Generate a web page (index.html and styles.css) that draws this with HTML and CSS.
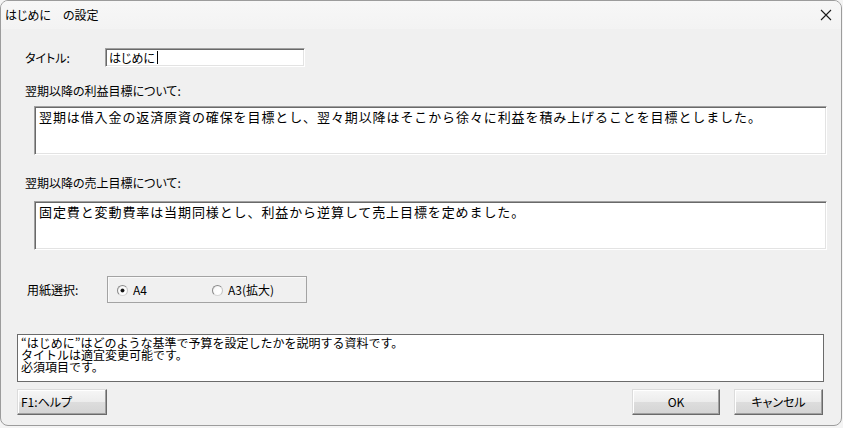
FILE: index.html
```html
<!DOCTYPE html>
<html lang="ja">
<head>
<meta charset="utf-8">
<title>はじめに　の設定</title>
<link rel="stylesheet" href="styles.css">
</head>
<body>
<div class="window">
  <div class="titlebar">
    <span class="title">はじめに　の設定</span>
    <svg class="close" width="12" height="12" viewBox="0 0 12 12"><path d="M1 1 L11 11 M11 1 L1 11" stroke="#1a1a1a" stroke-width="1.1" fill="none"/></svg>
  </div>
  <div class="content">
    <div class="title-row">
      <span class="label title-label">タイトル:</span>
      <div class="edit title-input">はじめに<span class="caret"></span></div>
    </div>
    <div class="label section-label first">翌期以降の利益目標について:</div>
    <div class="edit memo">翌期は借入金の返済原資の確保を目標とし、翌々期以降はそこから徐々に利益を積み上げることを目標としました。</div>
    <div class="label section-label second">翌期以降の売上目標について:</div>
    <div class="edit memo">固定費と変動費率は当期同様とし、利益から逆算して売上目標を定めました。</div>
    <div class="paper-row">
      <span class="label paper-label">用紙選択:</span>
      <div class="group">
        <span class="radio-item a4"><span class="radio checked"></span><span class="radio-text">A4</span></span>
        <span class="radio-item a3"><span class="radio"></span><span class="radio-text">A3(拡大)</span></span>
      </div>
    </div>
    <div class="info">
      <div class="info-line">“はじめに”はどのような基準で予算を設定したかを説明する資料です。</div>
      <div class="info-line">タイトルは適宜変更可能です。</div>
      <div class="info-line">必須項目です。</div>
    </div>
    <div class="buttons">
      <button class="btn help">F1:ヘルプ</button>
      <div class="right-buttons">
        <button class="btn ok">OK</button>
        <button class="btn cancel">キャンセル</button>
      </div>
    </div>
  </div>
</div>
</body>
</html>
```
FILE: styles.css
```css
* { box-sizing: border-box; }
html, body { margin: 0; padding: 0; }
body {
  background: #f4f4f4;
  width: 843px;
  height: 428px;
  overflow: hidden;
  font-family: "Noto Sans CJK JP", "Noto Sans", sans-serif;
  color: #000;
}
.window {
  width: 842px;
  height: 426px;
  background: #f0f0f0;
  border: 1px solid #9c9c9c;
  border-radius: 8px;
  overflow: hidden;
}
.titlebar {
  height: 28px;
  display: flex;
  align-items: center;
  justify-content: space-between;
  padding: 0 9px 0 4px;
  background: linear-gradient(#f7f7f7, #f3f3f3);
}
.title {
  font-size: 12px;
  font-feature-settings: "palt";
  line-height: 14px;
  margin-top: -1px;
}
.close { display: block; margin-top: -1px; }
.content { padding: 0; }
.label {
  font-size: 12px;
  line-height: 14px;
  font-feature-settings: "palt";
  white-space: nowrap;
}
.title-row {
  display: flex;
  align-items: center;
  margin-top: 19px;
  padding-left: 24px;
}
.title-label { width: 80px; }
.edit {
  background: #fff;
  border: 1px solid;
  border-color: #a0a0a0 #fff #fff #a0a0a0;
  box-shadow: inset 1px 1px 0 #696969, inset -1px -1px 0 #e3e3e3;
}
.title-input {
  width: 200px;
  height: 19px;
  font-size: 12px;
  line-height: 17px;
  padding-left: 3px;
  font-feature-settings: "palt";
  display: flex;
  align-items: center;
}
.caret {
  display: inline-block;
  width: 1px;
  height: 13px;
  background: #000;
  margin-left: 2px;
}
.section-label { margin-left: 24px; }
.section-label.first { margin-top: 17px; }
.section-label.second { margin-top: 21px; }
.memo {
  margin-left: 33px;
  width: 793px;
  height: 49px;
  margin-top: 8px;
  padding: 2px 4px;
  font-size: 13px;
  letter-spacing: 0.9px;
  line-height: 16px;
  white-space: nowrap;
  overflow: hidden;
}
.section-label.second + .memo { margin-top: 11px; }
.paper-row {
  display: flex;
  align-items: center;
  margin-top: 26px;
  padding-left: 26px;
}
.paper-label { width: 80px; }
.group {
  width: 200px;
  height: 27px;
  border: 1px solid #a3a3a3;
  box-shadow: inset 1px 1px 0 #fafafa;
  display: flex;
  align-items: center;
  padding-left: 9px;
}
.radio-item {
  display: flex;
  align-items: center;
  font-size: 12px;
  font-feature-settings: "palt";
  line-height: 14px;
}
.radio-item.a4 { width: 95px; }
.radio {
  width: 11px;
  height: 11px;
  border-radius: 50%;
  border: 1px solid;
  border-color: #8a8a8a #c4c4c4 #d6d6d6 #8a8a8a;
  background: radial-gradient(circle at 65% 65%, #ffffff 0%, #fbfbfb 55%, #e2e2e2 100%);
  position: relative;
  margin-right: 5px;
  margin-top: 1px;
}
.radio.checked::after {
  content: "";
  position: absolute;
  left: 3px;
  top: 3px;
  width: 3px;
  height: 3px;
  border-radius: 50%;
  background: #111;
  box-shadow: 0 0 0 0.5px #333;
}
.info {
  margin-left: 16px;
  margin-top: 31px;
  width: 807px;
  height: 48px;
  background: #fff;
  border: 1px solid #6b6b6b;
  padding: 2px 3px 0;
  font-size: 12px;
  white-space: nowrap;
}
.info-line {
  height: 12px;
  line-height: 12px;
}
.buttons {
  display: flex;
  justify-content: space-between;
  margin-left: 16px;
  margin-top: 7px;
  width: 806px;
}
.right-buttons { display: flex; gap: 14px; }
.btn {
  height: 26px;
  font-family: "Noto Sans CJK JP", "Noto Sans", sans-serif;
  font-size: 12px;
  font-feature-settings: "palt";
  line-height: 14px;
  color: #000;
  border: 1px solid;
  border-color: #dcdcdc #6a6a6a #6a6a6a #dcdcdc;
  box-shadow: inset -1px -1px 0 #a0a0a0, inset 1px 1px 0 #ffffff;
  background: linear-gradient(#f6f6f6 0%, #ececec 50%, #dddddd 51%, #d4d4d4 100%);
  padding: 0;
  margin: 0;
}
.help { width: 90px; text-align: left; padding-left: 3px; }
.ok { width: 88px; }
.cancel { width: 89px; }
```
